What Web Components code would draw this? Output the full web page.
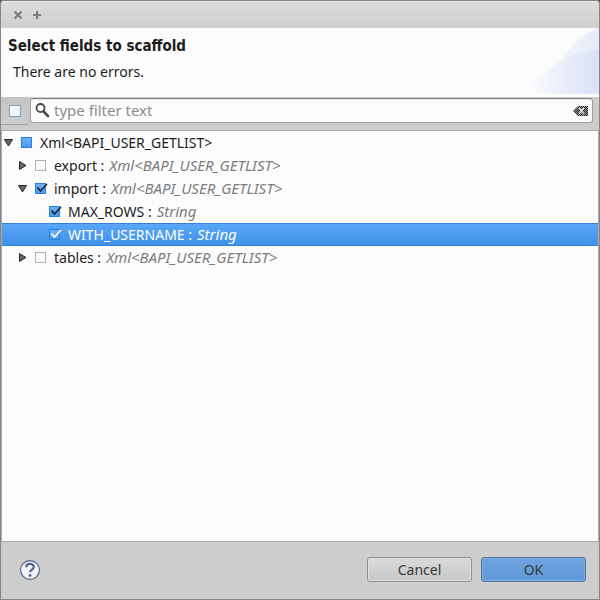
<!DOCTYPE html>
<html lang="en">
<head>
<meta charset="utf-8">
<title>Select fields to scaffold</title>
<style>
html, body { height: 100%; }
body { margin: 0; background: #5c5c5c; font: 14px/22px "Noto Sans", "Open Sans", sans-serif; color: #1c1c1c; }
</style>
</head>
<body>
<scaffold-dialog>
  <window-bar slot="bar"></window-bar>
  <dialog-banner slot="banner"><span slot="title">Select fields to scaffold</span>There are no errors.</dialog-banner>
  <filter-bar slot="filter"></filter-bar>
  <field-tree>
    <tree-row level="0" arrow="open" state="mixed">Xml&lt;BAPI_USER_GETLIST&gt;</tree-row>
    <tree-row level="1" arrow="closed">export :<span slot="type">Xml&lt;BAPI_USER_GETLIST&gt;</span></tree-row>
    <tree-row level="1" arrow="open" state="checked">import :<span slot="type">Xml&lt;BAPI_USER_GETLIST&gt;</span></tree-row>
    <tree-row level="2" state="checked">MAX_ROWS :<span slot="type">String</span></tree-row>
    <tree-row level="2" state="checked" selected>WITH_USERNAME :<span slot="type">String</span></tree-row>
    <tree-row level="1" arrow="closed">tables :<span slot="type">Xml&lt;BAPI_USER_GETLIST&gt;</span></tree-row>
  </field-tree>
  <dialog-footer slot="footer">
    <push-button>Cancel</push-button>
    <push-button primary>OK</push-button>
  </dialog-footer>
</scaffold-dialog>
<script>
function define(name, html, setup) {
  const template = document.createElement('template');
  template.innerHTML = html;
  customElements.define(name, class extends HTMLElement {
    constructor() {
      super();
      this.attachShadow({ mode: 'open' }).append(template.content.cloneNode(true));
    }
    connectedCallback() { if (setup) setup(this, this.shadowRoot); }
  });
}

define('scaffold-dialog', `
<style>
:host { display: flex; flex-direction: column; box-sizing: border-box; height: 100vh; border: 1px solid #868686; border-radius: 4px 4px 0 0; background: #cdcdcd; overflow: hidden; }
</style>
<slot name="bar"></slot><slot name="banner"></slot><slot name="filter"></slot><slot></slot><slot name="footer"></slot>`);

define('window-bar', `
<style>
:host { display: flex; flex: none; align-items: center; gap: 9px; box-sizing: border-box; height: 27px; padding: 1px 12px 0; background: linear-gradient(#dcdcdc, #cecece); box-shadow: inset 0 1px #e8e8e8; }
button { all: unset; display: block; width: 10px; height: 10px; }
svg { display: block; }
path { stroke: #7b7b7b; stroke-width: 2; fill: none; }
</style>
<button aria-label="Close"><svg width="10" height="10"><path d="M1.500 1.500l7 7M8.500 1.500l-7 7"/></svg></button>
<button aria-label="Maximize"><svg width="10" height="10"><path d="M5 1v8M1 5h8"/></svg></button>`);

define('dialog-banner', `
<style>
:host { display: flex; flex: none; justify-content: space-between; height: 69px; background: #fcfcfc; }
.text { padding: 7px; }
h1 { margin: 0; font: 700 15px/22px "DejaVu Sans Condensed", "DejaVu Sans", sans-serif; }
p { margin: 4px 0 0 5px; line-height: 22px; }
svg { display: block; }
</style>
<div class="text"><h1><slot name="title"></slot></h1><p><slot></slot></p></div>
<svg width="75" height="66" viewBox="0 0 75 66" aria-hidden="true">
  <defs>
    <linearGradient id="a"><stop offset="0" stop-color="#fcfcfc"/><stop offset=".45" stop-color="#f1f4fa"/><stop offset="1" stop-color="#e3eaf7"/></linearGradient>
    <linearGradient id="b"><stop offset="0" stop-color="#fcfcfc"/><stop offset=".4" stop-color="#edf1f9"/><stop offset="1" stop-color="#d8e1f4"/></linearGradient>
  </defs>
  <path d="M2 66C16 35 43 8 75 0V66z" fill="#f9fafc"/>
  <path d="M5 66C35 44 44 10 75 0V66z" fill="url(#a)"/>
  <path d="M2 66C19 40 46 23 75 22V66z" fill="url(#b)"/>
</svg>`);

define('filter-bar', `
<style>
:host { display: flex; flex: none; gap: 1px; align-items: flex-start; box-sizing: border-box; height: 33px; padding-right: 6px; }
.all { all: unset; box-sizing: border-box; display: grid; place-items: center; width: 28px; height: 28px; background: linear-gradient(#c4c4c4, #cdcdcd); border-right: 1px solid #c2c2c2; border-bottom: 1px solid #a2a2a2; }
.all i { box-sizing: border-box; width: 12px; height: 12px; border: 1px solid #8a9bb0; background: linear-gradient(135deg, #fff, #dff1fc); }
.field { display: flex; flex: 1; align-items: center; box-sizing: border-box; min-width: 0; height: 25px; margin-top: 1px; padding: 0 4px; border: 1px solid #a0a0a0; border-top-color: #868686; border-radius: 3px; background: #fcfcfc; box-shadow: inset 0 1px #e0e0e0; }
input { box-sizing: border-box; flex: 1; min-width: 0; height: 23px; border: 0; outline: 0; padding: 0 0 2px; margin-left: 4px; background: none; font: inherit; font-size: 15px; color: #1c1c1c; }
input::placeholder { color: #8c8c8c; opacity: 1; }
button { all: unset; display: block; }
svg { display: block; flex: none; }
</style>
<button class="all" aria-label="Select all"><i></i></button>
<div class="field">
  <svg width="15" height="18" viewBox="0 0 15 18" aria-hidden="true"><circle cx="5.500" cy="6" r="4" fill="none" stroke="#484848" stroke-width="1.800"/><path d="M8.500 9.500l4.500 4.500" stroke="#484848" stroke-width="2.600" stroke-linecap="round"/></svg>
  <input type="text" placeholder="type filter text" aria-label="Filter">
  <button aria-label="Clear"><svg width="15" height="10" viewBox="0 0 15 10">
    <defs><pattern id="c" width="2" height="2" patternUnits="userSpaceOnUse"><path fill="#a0a0a0" d="M0 0h2v2H0z"/><path fill="#1d1d1d" d="M0 0h1v1H0zM1 1h1v1H1z"/></pattern></defs>
    <path d="M0 5L5 0H15V10H5z" fill="url(#c)"/><path d="M6 2l5 6M11 2L6 8" stroke="#eee" stroke-width="1.200"/>
  </svg></button>
</div>`);

define('field-tree', `
<style>
:host { display: flex; flex-direction: column; flex: 1; min-height: 0; overflow: hidden; background: #fcfcfc; border: 1px solid #a9a9a9; }
</style>
<slot></slot>`);

define('tree-row', `
<style>
:host { --edge: #b2b2b2; display: flex; flex: none; align-items: center; box-sizing: border-box; height: 23px; padding-left: 2px; white-space: nowrap; }
:host([level="1"]) { padding-left: 16px; }
:host([level="2"]) { padding-left: 30px; }
:host([selected]) { color: #fff; background: linear-gradient(#5ba8f8, #3e90ea); box-shadow: inset 0 1px #2f83dd, inset 0 -1px #2f83dd; }
button { all: unset; display: block; flex: none; width: 10px; height: 12px; margin-right: 7px; }
button svg, .mark { display: none; }
:host([arrow="open"]) .open, :host([arrow="closed"]) .closed { display: block; }
:host([state="checked"]) .mark { display: block; }
label { display: flex; align-items: center; }
.box { display: grid; width: 13px; height: 13px; margin-right: 6px; align-items: center; }
.box > * { grid-area: 1 / 1; }
input { appearance: none; box-sizing: border-box; width: 11px; height: 11px; margin: 0; border: 1px solid var(--edge); background: #fcfcfc; }
input:checked, input:indeterminate { border-color: #2f7fd0; background: linear-gradient(#68b0fa, #4a9bf0); }
svg { overflow: visible; }
.text { display: flex; align-items: baseline; gap: 5px; height: 22px; }
.type { color: #7c7c7c; font-size: 15px; line-height: 20px; font-style: italic; }
:host([selected]) .type { color: #fff; }
.mark path { stroke: #242424; stroke-width: 1.700; fill: none; }
:host([selected]) .mark path { stroke: #fff; }
</style>
<button aria-label="Toggle">
  <svg class="open" width="10" height="12"><path d="M.5 2.500h8L4.500 9z" fill="#666" stroke="#2a2a2a"/></svg>
  <svg class="closed" width="10" height="12"><path d="M1.500 1.500v8L8 5.500z" fill="#666" stroke="#2a2a2a"/></svg>
</button>
<label><span class="box"><input type="checkbox"><svg class="mark" width="13" height="13" viewBox="0 0 13 13"><path d="M2.500 5.500L5.500 9L12 2"/></svg></span>
<span class="text"><span><slot></slot></span><span class="type"><slot name="type"></slot></span></span></label>`, (host, root) => {
  const box = root.querySelector('input');
  box.checked = host.getAttribute('state') === 'checked';
  box.indeterminate = host.getAttribute('state') === 'mixed';
  if (!host.hasAttribute('arrow')) root.querySelector('button').disabled = true;
});

define('dialog-footer', `
<style>
:host { display: flex; flex: none; align-items: center; gap: 9px; box-sizing: border-box; height: 57px; padding: 0 13px 2px 19px; }
.help { all: unset; display: block; margin-right: auto; }
svg { display: block; }
</style>
<button class="help" aria-label="Help"><svg width="20" height="20" viewBox="1 1 20 20"><circle cx="11" cy="11" r="9.400" fill="#f4f4f4" stroke="#50648a" stroke-width="1.200"/><path d="M7.200 8.300C7.200 3.800 14.800 3.800 14.800 8C14.800 10.700 11 10.500 11 13.300" fill="none" stroke="#50648a" stroke-width="2.200"/><circle cx="11" cy="16.500" r="1.400" fill="#50648a"/></svg></button>
<slot></slot>`);

define('push-button', `
<style>
:host { display: block; }
button { box-sizing: border-box; width: 105px; height: 25px; padding: 0; border: 1px solid #919191; border-radius: 3px; background: linear-gradient(#dadada, #c8c8c8); box-shadow: inset 0 0 0 1px #e0e0e0; font: inherit; line-height: 22px; color: #3a3a3a; display: block; }
:host([primary]) button { border-color: #55749a; background: linear-gradient(#70a4e0, #5f99da); box-shadow: inset 0 0 0 1px #7caee6; }
</style>
<button><slot></slot></button>`);
</script>
</body>
</html>
